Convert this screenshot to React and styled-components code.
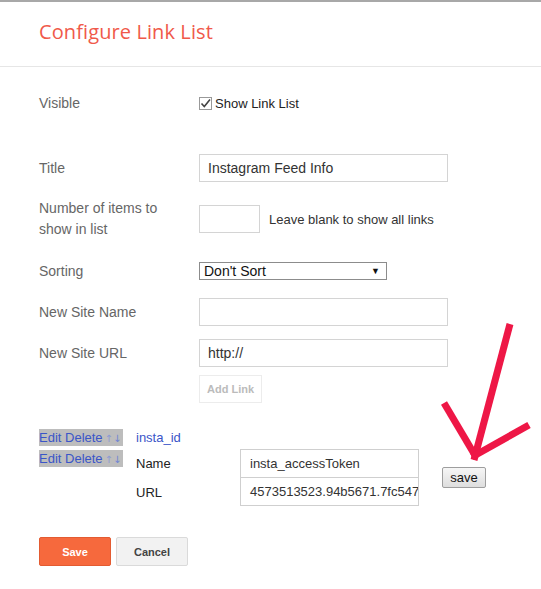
import React from 'react'
import styled, { createGlobalStyle } from 'styled-components'

const GlobalStyle = createGlobalStyle`
  html, body {
    margin: 0;
    padding: 0;
    background: #fff;
  }
  body {
    font-family: "Liberation Sans", Arial, sans-serif;
    width: 541px;
    height: 589px;
    overflow: hidden;
  }
`

const Page = styled.div`
  position: relative;
  width: 541px;
  height: 589px;
  border-top: 2px solid #a8a8a8;
  box-sizing: border-box;
`

const Header = styled.div`
  height: 64px;
  border-bottom: 1px solid #e6e6e6;
  padding-left: 39px;
  display: flex;
  align-items: flex-start;
`

const Heading = styled.h1`
  margin: 16px 0 0;
  font-family: "Open Sans", sans-serif;
  font-weight: 400;
  font-size: 20px;
  color: #f0594a;
  letter-spacing: 0.1px;
`

const Form = styled.div`
  padding-left: 39px;
`

const Row = styled.div`
  display: flex;
  align-items: center;
  margin-top: ${p => p.$top}px;
  min-height: ${p => p.$h || 28}px;
`

const Label = styled.div`
  width: 160px;
  font-size: 14px;
  line-height: 21px;
  color: #666;
`

const TextInput = styled.div`
  box-sizing: border-box;
  width: ${p => p.$w || 249}px;
  height: 28px;
  border: 1px solid #d4d4d4;
  padding-left: 8px;
  display: flex;
  align-items: center;
  font-size: 14px;
  color: #333;
  white-space: nowrap;
  overflow: hidden;
`

const Hint = styled.span`
  margin-left: 9px;
  font-size: 13px;
  color: #333;
`

const CheckLabel = styled.label`
  display: flex;
  align-items: center;
  font-size: 13px;
  color: #222;
`

const Box = styled.span`
  box-sizing: border-box;
  width: 13px;
  height: 13px;
  border: 1px solid #999;
  margin-right: 3px;
  display: flex;
  align-items: center;
  justify-content: center;
  background: #fff;
`

const Select = styled.div`
  box-sizing: border-box;
  width: 188px;
  height: 18px;
  border: 1px solid #8c8c8c;
  padding: 0 6px 0 4px;
  display: flex;
  align-items: center;
  justify-content: space-between;
  font-size: 14px;
  color: #111;
`

const Caret = styled.span`
  font-size: 9px;
  color: #111;
`

const GhostButton = styled.div`
  box-sizing: border-box;
  width: 63px;
  height: 28px;
  border: 1px solid #ececec;
  display: flex;
  align-items: center;
  justify-content: center;
  font-size: 11px;
  font-weight: bold;
  color: #bbb;
`

const Links = styled.div`
  display: flex;
  margin-top: 26px;
`

const Actions = styled.div`
  width: 97px;
  display: flex;
  flex-direction: column;
  gap: 4px;
`

const ActionBar = styled.div`
  width: 84px;
  height: 17px;
  background: #bdbdbd;
  font-size: 13px;
  line-height: 17px;
  color: #3a55c8;
  white-space: nowrap;
`

const Arrow = styled.span`
  font-family: "DejaVu Sans", sans-serif;
  font-size: 10px;
  color: ${p => p.$c};
  margin-left: ${p => p.$gap}px;
`

const Details = styled.div`
  display: flex;
  flex-direction: column;
`

const LinkName = styled.div`
  font-size: 13px;
  line-height: 17px;
  color: #3a55c8;
`

const EditRow = styled.div`
  display: flex;
  align-items: center;
  margin-top: 3px;
`

const EditGrid = styled.div`
  display: grid;
  grid-template-columns: 104px 179px;
  align-items: center;
`

const EditLabel = styled.div`
  font-size: 13px;
  color: #222;
`

const EditInput = styled.div`
  box-sizing: border-box;
  height: ${p => p.$h}px;
  border: 1px solid #cfcfcf;
  border-top-width: ${p => (p.$first ? 1 : 0)}px;
  padding-left: 9px;
  display: flex;
  align-items: center;
  font-size: 13px;
  color: #333;
  white-space: nowrap;
  overflow: hidden;
`

const NativeButton = styled.div`
  box-sizing: border-box;
  margin-left: 23px;
  width: 44px;
  height: 21px;
  border: 1px solid #9e9e9e;
  border-radius: 2px;
  background: linear-gradient(#f6f6f6, #dedede);
  display: flex;
  align-items: center;
  justify-content: center;
  font-size: 13px;
  color: #111;
`

const Footer = styled.div`
  display: flex;
  gap: 5px;
  margin-top: 31px;
`

const Button = styled.div`
  box-sizing: border-box;
  width: 72px;
  height: 29px;
  border-radius: 2px;
  border: 1px solid ${p => (p.$primary ? '#e35b31' : '#dadada')};
  background: ${p => (p.$primary ? '#f6693d' : '#f2f2f2')};
  color: ${p => (p.$primary ? '#fff' : '#444')};
  display: flex;
  align-items: center;
  justify-content: center;
  font-size: 11px;
  font-weight: bold;
`

const Overlay = styled.svg`
  position: absolute;
  left: 0;
  top: 0;
  pointer-events: none;
`

function ActionLinks() {
  return (
    <ActionBar>
      Edit Delete
      <Arrow $c="#8d9bd2" $gap={2}>↑</Arrow>
      <Arrow $c="#6f84d4" $gap={0}>↓</Arrow>
    </ActionBar>
  )
}

export default function App() {
  return (
    <Page>
      <GlobalStyle />
      <Header>
        <Heading>Configure Link List</Heading>
      </Header>
      <Form>
        <Row $top={22}>
          <Label>Visible</Label>
          <CheckLabel>
            <Box>
              <svg width="11" height="11" viewBox="0 0 11 11">
                <path d="M1.5 5.5 L4.3 8.5 L10 1.5" fill="none" stroke="#444" strokeWidth="1.6" />
              </svg>
            </Box>
            Show Link List
          </CheckLabel>
        </Row>
        <Row $top={37}>
          <Label>Title</Label>
          <TextInput>Instagram Feed Info</TextInput>
        </Row>
        <Row $top={16} $h={42}>
          <Label>Number of items to<br />show in list</Label>
          <TextInput $w={61} />
          <Hint>Leave blank to show all links</Hint>
        </Row>
        <Row $top={17}>
          <Label>Sorting</Label>
          <Select>
            Don't Sort
            <Caret>▼</Caret>
          </Select>
        </Row>
        <Row $top={13}>
          <Label>New Site Name</Label>
          <TextInput />
        </Row>
        <Row $top={13}>
          <Label>New Site URL</Label>
          <TextInput>http://</TextInput>
        </Row>
        <Row $top={8}>
          <Label />
          <GhostButton>Add Link</GhostButton>
        </Row>

        <Links>
          <Actions>
            <ActionLinks />
            <ActionLinks />
          </Actions>
          <Details>
            <LinkName>insta_id</LinkName>
            <EditRow>
              <EditGrid>
                <EditLabel>Name</EditLabel>
                <EditInput $h={29} $first>insta_accessToken</EditInput>
                <EditLabel>URL</EditLabel>
                <EditInput $h={28}>4573513523.94b5671.7fc547a</EditInput>
              </EditGrid>
              <NativeButton>save</NativeButton>
            </EditRow>
          </Details>
        </Links>

        <Footer>
          <Button $primary>Save</Button>
          <Button>Cancel</Button>
        </Footer>
      </Form>

      <Overlay width="541" height="589">
        <g stroke="#ee1746" strokeWidth="7" strokeLinecap="butt" fill="none">
          <line x1="510" y1="322" x2="474" y2="458" />
          <line x1="444" y1="401" x2="476" y2="455" />
          <line x1="529" y1="423" x2="472" y2="455" />
        </g>
      </Overlay>
    </Page>
  )
}
